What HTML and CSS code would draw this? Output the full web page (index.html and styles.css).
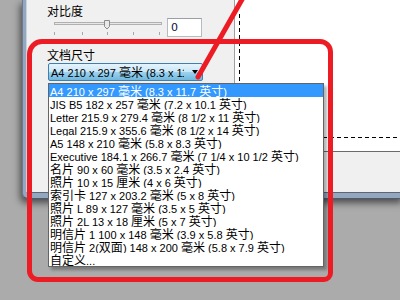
FILE: index.html
```html
<!DOCTYPE html>
<html>
<head>
<meta charset="utf-8">
<link rel="stylesheet" href="styles.css">
</head>
<body>
<div class="stage">
  <div class="frame">
    <div class="window">
      <div class="settings">
        <div class="label">对比度</div>
        <div class="slider-row">
          <svg class="slider" width="112" height="19" viewBox="0 0 112 19">
            <rect x="2.5" y="4.5" width="107" height="2" fill="#e7e7e7" stroke="#b0b0b0"/>
            <path d="M52.5 2.5 H57.5 V8.5 L55 11 L52.5 8.5 Z" fill="#e9e9e9" stroke="#8b8b8b"/>
            <rect x="2" y="14" width="1" height="3" fill="#a6a6a6"/>
            <rect x="30" y="14" width="1" height="3" fill="#a6a6a6"/>
            <rect x="55" y="14" width="1" height="3" fill="#a6a6a6"/>
            <rect x="81" y="14" width="1" height="3" fill="#a6a6a6"/>
            <rect x="107" y="14" width="1" height="3" fill="#a6a6a6"/>
          </svg>
          <div class="spin">0</div>
        </div>
        <div class="label label2">文档尺寸</div>
        <div class="combo">
          <span class="combo-text">A4 210 x 297 <span class="c">毫米</span> (8.3 x 11.7 <span class="c">英寸</span>)</span>
          <span class="arrow"></span>
        </div>
      </div>
      <div class="preview">
        <div class="page"><div class="margins"></div></div>
        <div class="statusbar"></div>
      </div>
    </div>
  </div>

  <div class="list">
    <div class="opt sel">A4 210 x 297 <span class="c">毫米</span> (8.3 x 11.7 <span class="c">英寸</span>)</div>
    <div class="opt">JIS B5 182 x 257 <span class="c">毫米</span> (7.2 x 10.1 <span class="c">英寸</span>)</div>
    <div class="opt">Letter 215.9 x 279.4 <span class="c">毫米</span> (8 1/2 x 11 <span class="c">英寸</span>)</div>
    <div class="opt">Legal 215.9 x 355.6 <span class="c">毫米</span> (8 1/2 x 14 <span class="c">英寸</span>)</div>
    <div class="opt">A5 148 x 210 <span class="c">毫米</span> (5.8 x 8.3 <span class="c">英寸</span>)</div>
    <div class="opt">Executive 184.1 x 266.7 <span class="c">毫米</span> (7 1/4 x 10 1/2 <span class="c">英寸</span>)</div>
    <div class="opt"><span class="c">名片</span> 90 x 60 <span class="c">毫米</span> (3.5 x 2.4 <span class="c">英寸</span>)</div>
    <div class="opt"><span class="c">照片</span> 10 x 15 <span class="c">厘米</span> (4 x 6 <span class="c">英寸</span>)</div>
    <div class="opt"><span class="c">索引卡</span> 127 x 203.2 <span class="c">毫米</span> (5 x 8 <span class="c">英寸</span>)</div>
    <div class="opt"><span class="c">照片</span> L 89 x 127 <span class="c">毫米</span> (3.5 x 5 <span class="c">英寸</span>)</div>
    <div class="opt"><span class="c">照片</span> 2L 13 x 18 <span class="c">厘米</span> (5 x 7 <span class="c">英寸</span>)</div>
    <div class="opt"><span class="c">明信片</span> 1 100 x 148 <span class="c">毫米</span> (3.9 x 5.8 <span class="c">英寸</span>)</div>
    <div class="opt"><span class="c">明信片</span> 2(<span class="c">双面</span>) 148 x 200 <span class="c">毫米</span> (5.8 x 7.9 <span class="c">英寸</span>)</div>
    <div class="opt"><span class="c">自定义</span>...</div>
  </div>

  <div class="callout"></div>
  <svg class="pointer" width="400" height="300" viewBox="0 0 400 300">
    <line x1="244" y1="-4" x2="198" y2="77" stroke="#ed1c24" stroke-width="5" stroke-linecap="round"/>
  </svg>
</div>
</body>
</html>
```

FILE: styles.css
```css
html, body {
  margin: 0;
  padding: 0;
}
body {
  background: #ababab;
  font-family: "Liberation Sans", "Noto Sans CJK SC", sans-serif;
  font-size: 11px;
  color: #000;
}
.stage {
  position: relative;
  width: 400px;
  height: 300px;
  overflow: hidden;
}
.c {
  font-family: "Noto Sans CJK SC", sans-serif;
  font-size: 12px;
}
.frame {
  margin-left: 22px;
  width: 378px;
  border-left: 1px solid #6c7a8a;
  border-bottom: 1px solid #4f5b68;
  border-bottom-left-radius: 6px;
  background: #93a7c0;
  padding: 0 0 5px 3px;
  box-shadow: -2px 4px 7px rgba(0, 0, 0, 0.55);
}
.window {
  display: flex;
  height: 192px;
  border-left: 1px solid #c9d3de;
  border-bottom: 1px solid #5d6672;
  background: #f0f0f0;
}
.settings {
  width: 207px;
  flex: none;
  border-right: 1px solid #a0a0a0;
  padding-top: 4px;
}
.label {
  font-family: "Noto Sans CJK SC", sans-serif;
  font-size: 12px;
  line-height: 14px;
  height: 14px;
  padding-left: 20px;
}
.label2 {
  margin-top: 11px;
}
.slider-row {
  display: flex;
  align-items: flex-start;
  height: 19px;
}
.slider {
  display: block;
  margin-left: 25px;
}
.spin {
  margin-left: 3px;
  width: 35px;
  height: 19px;
  box-sizing: border-box;
  border: 1px solid #b6bac2;
  border-top-color: #9a9ea6;
  background: #fff;
  font-family: "DejaVu Sans", sans-serif;
  font-size: 11px;
  line-height: 17px;
  padding-left: 3px;
  color: #101040;
}
.combo {
  margin-top: 1px;
  margin-left: 21px;
  width: 155px;
  height: 18px;
  box-sizing: border-box;
  border: 1px solid #3c7fb1;
  border-radius: 2px;
  background: linear-gradient(#e5f4fc, #c9e7f8 48%, #9dd2ef 52%, #6fb8de);
  display: flex;
  align-items: center;
  overflow: hidden;
}
.combo-text {
  display: block;
  width: 133px;
  overflow: hidden;
  white-space: nowrap;
  padding-left: 2px;
  line-height: 16px;
}
.arrow {
  margin-left: 8px;
  width: 0;
  height: 0;
  border-left: 3.5px solid transparent;
  border-right: 3.5px solid transparent;
  border-top: 4px solid #000;
}
.preview {
  flex: 1;
  display: flex;
  flex-direction: column;
}
.page {
  height: 152px;
  background: #fff;
  border-bottom: 1px solid #6b6b6b;
  padding: 14px 0 0 4px;
  box-sizing: border-box;
}
.margins {
  height: 124px;
  background-image:
    repeating-linear-gradient(to bottom, #000 0 4px, transparent 4px 7px),
    repeating-linear-gradient(to right, #000 0 4px, transparent 4px 7px);
  background-size: 1px 100%, 100% 1px;
  background-position: left top, left bottom;
  background-repeat: no-repeat;
}
.statusbar {
  flex: 1;
  background: #f0f0f0;
}
.list {
  position: absolute;
  left: 48px;
  top: 83px;
  width: 276px;
  height: 184px;
  box-sizing: border-box;
  border: 1px solid #646464;
  background: #fff;
  box-shadow: 3px 3px 3px rgba(0, 0, 0, 0.3);
}
.opt {
  height: 13px;
  line-height: 13px;
  padding-left: 1px;
  white-space: nowrap;
  overflow: hidden;
}
.opt .c {
  line-height: 13px;
}
.opt.sel {
  background: #3399ff;
  color: #fff;
}
.callout {
  position: absolute;
  left: 27px;
  top: 39px;
  width: 306px;
  height: 243px;
  box-sizing: border-box;
  border: 5px solid #ed1c24;
  border-radius: 15px 13px 9px 11px;
}
.pointer {
  position: absolute;
  left: 0;
  top: 0;
}
```
